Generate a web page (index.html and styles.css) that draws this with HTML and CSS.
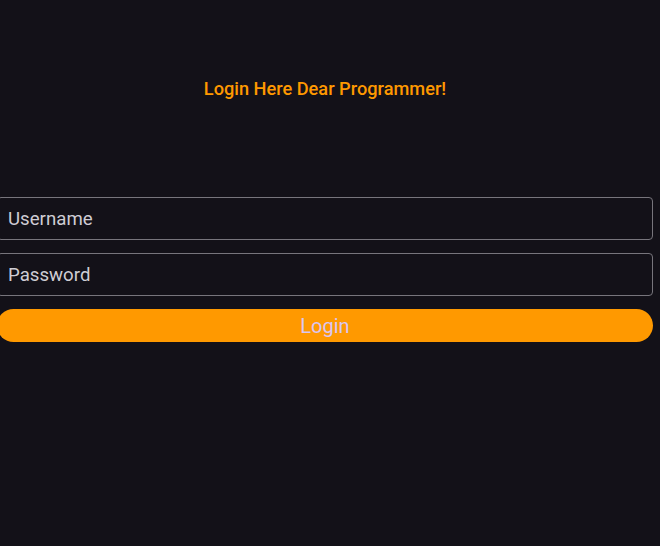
FILE: index.html
```html
<!DOCTYPE html>
<html>
<head>
<meta charset="utf-8">
<link rel="stylesheet" href="styles.css">
</head>
<body>
<div class="page">
  <h1 class="title">Login Here Dear Programmer!</h1>
  <form class="form">
    <input class="field" type="text" placeholder="Username">
    <input class="field" type="password" placeholder="Password">
    <button class="btn" type="button">Login</button>
  </form>
</div>
</body>
</html>
```
FILE: styles.css
```css
html, body {
  margin: 0;
  padding: 0;
  background: #131118;
  height: 100%;
}
.page {
  width: 656px;
  margin-left: -3px;
  font-family: Roboto, "Noto Sans", sans-serif;
}
.title {
  margin: 0;
  padding-top: 78px;
  text-align: center;
  font-size: 18.2px;
  line-height: 21px;
  font-weight: 500;
  color: #ff9900;
}
.form {
  display: flex;
  flex-direction: column;
  gap: 13px;
  margin-top: 98px;
}
.field {
  box-sizing: border-box;
  height: 43px;
  width: 100%;
  background: #131118;
  border: 1px solid #77757c;
  border-radius: 4px;
  padding: 0 10px;
  font-family: Roboto, sans-serif;
  font-size: 18.67px;
  color: #d0cfd6;
  outline: none;
}
.field::placeholder {
  color: #cfcdd4;
}
.btn {
  box-sizing: border-box;
  height: 33px;
  width: 100%;
  margin-top: 0;
  background: #ff9900;
  border: none;
  border-radius: 17px;
  font-family: Roboto, sans-serif;
  font-size: 20px;
  color: #d9c6f2;
  padding: 0;
}
```
